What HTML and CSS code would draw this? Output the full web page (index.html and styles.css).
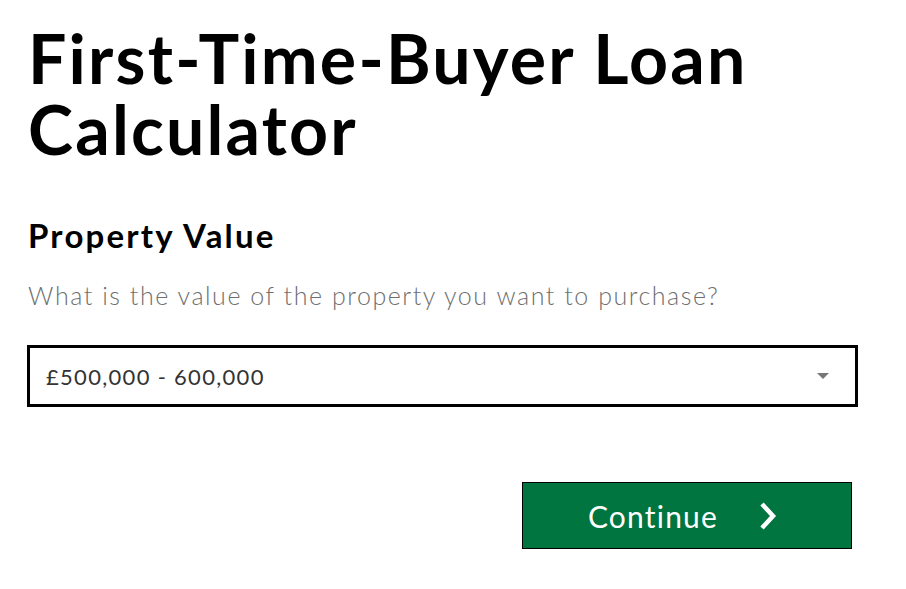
FILE: index.html
```html
<!doctype html>
<html>
    <head>
        <meta charset="utf-8">
        <title>First-Time-Buyer Loan Calculator</title>
        <link rel="stylesheet" href="styles.css">
    </head>
    <body>
        <div class="mainbox">
            <h1 class="title">First-Time-Buyer Loan Calculator</h1>
            <h2 class="question">Property Value</h2>
            <p class="hint">What is the value of the property you want to purchase?</p>
            <div class="selectbox">
                <span class="selected">£500,000 - 600,000</span>
                <span class="arrow"></span>
            </div>
            <div class="actions">
                <button class="continuebutton" type="button">
                    <span>Continue</span>
                    <svg class="chevron" width="20" height="30" viewBox="0 0 20 30">
                        <path d="M4 3 L15 15 L4 27" fill="none" stroke="white" stroke-width="4.5"/>
                    </svg>
                </button>
            </div>
        </div>
    </body>
</html>
```

FILE: styles.css
```css
body {
    margin: 0;
    font-family: Lato, "Open Sans", sans-serif;
    background-color: white;
}
.mainbox {
    width: 831px;
    padding: 22px 0 0 27px;
}
.title {
    margin: 0;
    font-size: 68px;
    line-height: 71px;
    font-weight: 700;
    letter-spacing: 2.2px;
    color: black;
    padding-left: 1px;
}
.question {
    margin: 51px 0 0 1px;
    font-size: 33px;
    font-weight: 700;
    line-height: 40px;
    letter-spacing: 2.2px;
    color: black;
}
.hint {
    margin: 24px 0 0 1px;
    font-size: 25px;
    font-weight: 300;
    line-height: 32px;
    letter-spacing: 1.55px;
    color: #6f6f6f;
}
.selectbox {
    margin-top: 34px;
    height: 56px;
    border: 3px solid black;
    display: flex;
    align-items: center;
    justify-content: space-between;
    padding: 0 26px 0 16px;
}
.selected {
    font-size: 22px;
    letter-spacing: 1.3px;
    color: #333;
}
.arrow {
    width: 0;
    height: 0;
    border-left: 6px solid transparent;
    border-right: 6px solid transparent;
    border-top: 6px solid #777;
}
.actions {
    display: flex;
    justify-content: flex-end;
    padding-right: 6px;
    margin-top: 75px;
}
.continuebutton {
    width: 330px;
    height: 67px;
    background-color: #007540;
    border: 1px solid black;
    color: white;
    font-family: Lato, "Open Sans", sans-serif;
    font-size: 30px;
    letter-spacing: 1.2px;
    display: flex;
    align-items: center;
    justify-content: center;
    gap: 40px;
    padding: 0 8px 0 0;
    cursor: pointer;
}
```
